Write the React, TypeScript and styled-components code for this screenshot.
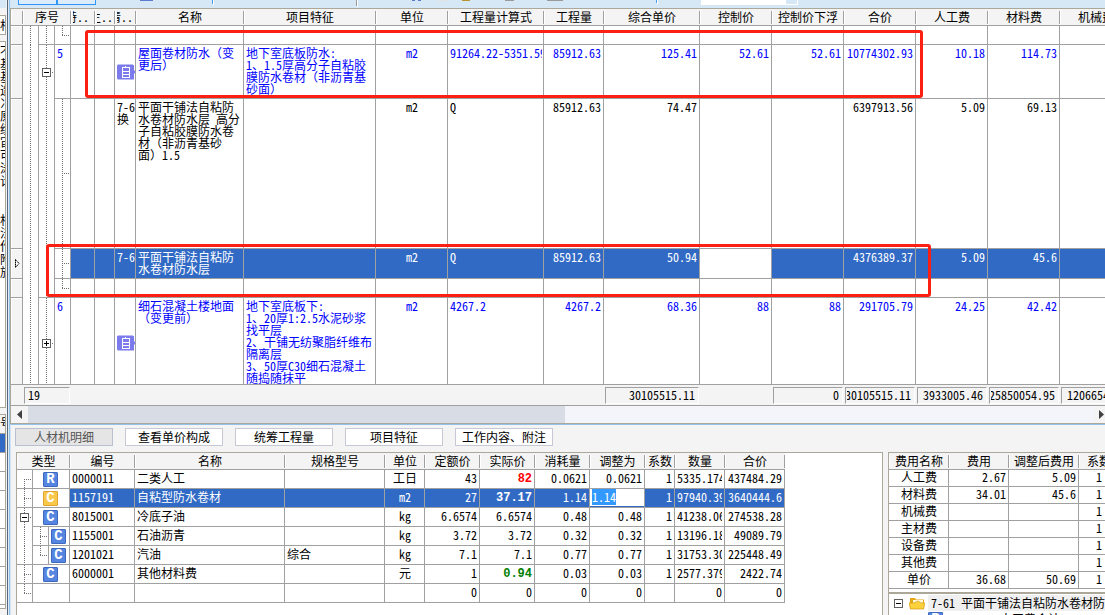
import React, { useEffect, useRef } from "react";
import styled, { createGlobalStyle, css } from "styled-components";

const LINE = "#a0a0a0";
const FACE = "#f4f4f4";
const EDGE = "#aca899";
const SELECT = "#316ac5";

const GlobalStyle = createGlobalStyle`
  * { box-sizing: border-box; }
  body {
    margin: 0;
    background: ${FACE};
    color: #000;
    font: 12px/12px "Noto Sans CJK SC", sans-serif;
    font-feature-settings: "hwid";
    overflow: hidden;
  }
  button, input { font: inherit; font-feature-settings: inherit; color: inherit; }
  svg { display: block; flex-shrink: 0; }
`;

const Page = styled.div`
  display: flex;
  height: 100vh;
`;

/* ---------- neighbouring window on the left ---------- */

const Side = styled.aside`
  flex: 0 0 10px;
  display: flex;
  flex-direction: column;
  background: linear-gradient(90deg, ${FACE} 7px, #56677a 7px 8px, #dfe9f2 8px 9px, #93c3ea 9px);
  padding-right: 4px;
  overflow: hidden;
`;
const SideBar = styled.div`
  height: 15px;
  background: linear-gradient(#d6e8f6 8px, ${FACE} 8px);
`;
const SidePane = styled.div<{ $h?: number }>`
  ${(p) => (p.$h ? `height: ${p.$h}px;` : "flex: 1;")}
  flex-shrink: ${(p) => (p.$h ? 0 : 1)};
  border: solid ${EDGE};
  border-width: 1px 1px 1px 0;
  background: #fff;
  overflow: hidden;
  margin-bottom: 6px;
`;
const SideText = styled.div`
  line-height: 13px;
  padding-top: 2px;
  white-space: pre-line;
  width: 12px;
`;
const SideRow = styled.div<{ $on?: boolean; $head?: boolean }>`
  height: 19px;
  width: 12px;
  padding-top: 2px;
  border-bottom: 1px solid ${LINE};
  background: ${(p) => (p.$on ? SELECT : p.$head ? FACE : "#fff")};
`;

/* ---------- main window ---------- */

const Main = styled.main`
  flex: 1;
  min-width: 0;
  display: flex;
  flex-direction: column;
`;
const Toolbar = styled.div`
  height: 8px;
  background: #d6e8f6;
  overflow: hidden;
`;
const Pane = styled.section`
  position: relative;
  border: solid ${EDGE};
  border-width: 1px 0 1px 1px;
`;
const Viewport = styled.div<{ $h?: number }>`
  overflow: hidden;
  ${(p) => (p.$h ? `height: ${p.$h}px;` : "")}
`;
const TotalsBar = styled(Viewport)`
  border-top: 1px solid ${LINE};
  background: ${FACE};
`;

const Table = styled.table`
  table-layout: fixed;
  width: 0;
  border-spacing: 0;
  background: #fff;
`;
const Th = styled.th`
  height: 17px;
  padding: 0 2px;
  font-weight: normal;
  text-align: center;
  white-space: nowrap;
  border-bottom: 1px solid ${LINE};
  background:
    linear-gradient(${LINE}, ${LINE}) right 2px / 1px 13px no-repeat,
    linear-gradient(#fff, #fff) left 2px / 1px 13px no-repeat,
    ${FACE};
`;
const ShortHead = styled.div`
  display: flex;
  justify-content: flex-end;
  overflow-x: clip;
  width: 16px;
`;
type CellProps = {
  $align?: "left" | "center" | "right";
  $mid?: boolean;
  $tight?: boolean;
  $flush?: boolean;
  $on?: boolean;
  $tone?: string;
  $bold?: boolean;
};
const Td = styled.td<CellProps>`
  padding: ${(p) => (p.$flush ? "0" : `${p.$mid ? 0 : 2}px ${p.$align === "right" ? 2 : p.$tight ? 0 : 1}px 0 2px`)};
  border: solid ${LINE};
  border-width: 0 1px 1px 0;
  vertical-align: ${(p) => (p.$mid ? "middle" : "top")};
  text-align: ${(p) => p.$align ?? "left"};
  background: ${(p) => (p.$on ? SELECT : "#fff")};
  color: ${(p) => p.$tone ?? "inherit"};
  ${(p) => p.$bold && css`font: bold 12px/15px "Liberation Mono", monospace;`}
`;
const Clip = styled.div`
  white-space: pre;
  overflow-x: clip;
`;
const Wide = styled.span`
  font-feature-settings: normal;
`;
const Gutter = styled.td`
  padding: 0 0 0 3px;
  border: solid ${LINE};
  border-width: 0 1px 1px 0;
  background: ${FACE};
  box-shadow: inset 1px 1px #fff;
  vertical-align: middle;
`;

type Trunk = "full" | "top" | "bottom";
const trunkBox = { full: "0 / 1px 100%", top: "0 / 1px 50%", bottom: "100% / 1px 50%" };
const Branch = styled.td<{ $trunk?: Trunk; $stub?: boolean; $open?: boolean }>`
  padding: 0;
  border: solid ${LINE};
  border-width: 0 1px ${(p) => (p.$open ? 0 : 1)}px 0;
  vertical-align: middle;
  background:
    repeating-linear-gradient(#707070 0 1px, transparent 1px 2px) 7px ${(p) => trunkBox[p.$trunk ?? "full"]} no-repeat,
    repeating-linear-gradient(90deg, #707070 0 1px, transparent 1px 2px) 7px 50% / ${(p) => (p.$stub ? "8px 1px" : "0 0")} no-repeat,
    #fff;
`;
const Toggle = styled.button`
  display: block;
  flex-shrink: 0;
  width: 9px;
  height: 9px;
  margin: 0 auto;
  padding: 0;
  border: 1px solid #606060;
  background:
    linear-gradient(#000, #000) center / 5px 1px no-repeat,
    #fff;
  &[aria-expanded="false"] {
    background:
      linear-gradient(#000, #000) center / 5px 1px no-repeat,
      linear-gradient(#000, #000) center / 1px 5px no-repeat,
      #fff;
  }
`;

const Total = styled.td`
  padding: 2px 1px 1px;
  height: 20px;
  background: ${FACE};
`;
const TotalBox = styled.div`
  height: 17px;
  display: flex;
  padding: 0 3px 0 1px;
  border: 1px solid #fff;
  border-color: ${LINE} #fff #fff ${LINE};
  line-height: 13px;
`;
const TotalText = styled.span<{ $left?: boolean }>`
  flex: 1;
  min-width: 0;
  display: flex;
  justify-content: ${(p) => (p.$left ? "flex-start" : "flex-end")};
  padding-left: ${(p) => (p.$left ? 2 : 0)}px;
  overflow-x: clip;
`;

const ScrollBar = styled.div`
  display: flex;
  height: 18px;
  border-top: 1px solid ${LINE};
  background: #f4f5fb;
`;
const ScrollButton = styled.button`
  flex: 0 0 17px;
  padding: 0;
  border: 0;
  background: ${FACE};
  display: flex;
  align-items: center;
  justify-content: center;
  &:last-child {
    flex-basis: 11px;
    justify-content: flex-end;
  }
`;
const ScrollTrack = styled.div`
  flex: 1;
`;
const ScrollThumb = styled.div`
  width: calc(50% + 4px);
  height: 17px;
  background: #d8dce5;
`;

const Mark = styled.div<{ $x: number; $y: number; $w: number; $h: number }>`
  position: absolute;
  left: ${(p) => p.$x}px;
  top: ${(p) => p.$y}px;
  width: ${(p) => p.$w}px;
  height: ${(p) => p.$h}px;
  border: 3px solid #fd2012;
  border-radius: 3px;
  pointer-events: none;
`;

/* ---------- lower area ---------- */

const Lower = styled.section`
  flex: 1;
  min-height: 0;
  display: flex;
  flex-direction: column;
  border-top: 1px solid #93c3ea;
  border-left: 1px solid #cfe3f4;
`;
const Tabs = styled.div`
  display: flex;
  gap: 12px;
  padding: 3px 4px 6px;
`;
const Tab = styled.button`
  width: 98px;
  height: 18px;
  padding: 0;
  border: 1px solid #c6c8d6;
  background: #fff;
  white-space: nowrap;
  &[aria-selected="true"] {
    background: #e5e5e5;
    border-color: #babfd0;
    color: #555;
  }
`;
const Split = styled.div`
  flex: 1;
  min-height: 0;
  display: flex;
  gap: 5px;
  padding-left: 5px;
`;
const Detail = styled.div`
  flex: 1;
  min-width: 0;
  overflow: hidden;
  background: #fff;
  border: solid ${EDGE};
  border-width: 1px 1px 0 1px;
`;
const Right = styled.div`
  flex: 0 0 217px;
  overflow: hidden;
  background: #fff;
  border: solid ${EDGE};
  border-width: 1px 0 0 1px;
`;
const Kind = styled.span<{ $gold?: boolean }>`
  display: block;
  width: 15px;
  height: 15px;
  border: 1px solid ${(p) => (p.$gold ? "#e0a52c" : "#3c68bd")};
  border-radius: 1px;
  background: ${(p) => (p.$gold ? "#f9c74a" : "#5585e0")};
  color: #fff;
  font: bold 14px/13px "Liberation Mono", monospace;
  text-align: center;
`;
const KindCell = styled.td<{ $pad: number }>`
  padding: 0 0 0 ${(p) => p.$pad}px;
  border: solid ${LINE};
  border-width: 0 1px 1px 0;
  vertical-align: middle;
`;
const FeeCell = styled(Td)`
  padding-top: 1px;
`;
const FactorCell = styled(FeeCell)`
  padding-left: 17px;
`;
const Editor = styled.input`
  display: block;
  width: 54px;
  height: 17px;
  padding: 0 0 3px 2px;
  border: 0;
  outline: 0;
  background: #fff;
  color: #000;
  caret-color: transparent;
  &::selection { background: #3399ff; color: #fff; }
`;
const Outline = styled.ul`
  list-style: none;
  margin: 3px 0 0;
  padding: 1px 0 0 5px;
  border-top: 2px solid ${EDGE};
`;
const Node = styled.li<{ $depth: number; $root?: boolean }>`
  display: flex;
  align-items: center;
  height: 16px;
  padding-left: ${(p) => p.$depth * 34}px;
  white-space: nowrap;
  gap: ${(p) => (p.$root ? 6 : 57)}px;
  ${(p) => p.$root && css`background: linear-gradient(90deg, #fff 34px, #f0f0f0 34px);`}
  & > ${Toggle} { margin: 0; }
`;

/* ---------- small drawings ---------- */

const NoteIcon = () => (
  <svg width="18" height="16" viewBox="0 0 18 16">
    <path d="M1 0.500H16V1H17V6L18 7V9L17 10V15.500H1L0 14.500V1.500Z" fill="#7b7bee" />
    <path d="M5 3H8V2H9V3H13V14H5ZM6 4V7H12V4ZM6 8V10H12V8ZM6 11V13H12V11Z" fill="#fff" fillRule="evenodd" />
  </svg>
);
const FolderIcon = () => (
  <svg width="16" height="14" viewBox="0 0 16 14">
    <path d="M1 2H6L7 3.500H15V13H1Z" fill="#e6a817" />
    <path d="M4 4H14V8H4Z" fill="#fff6d8" />
    <path d="M0 7H5L9 5L12 7H16L14.500 13H1.500Z" fill="#fbd23c" stroke="#d79a10" strokeWidth="0.700" />
  </svg>
);
const ToolbarArt = () => (
  <svg width="1100" height="8" viewBox="10 0 1100 8" shapeRendering="crispEdges">
    <path d="M18.500 -2V4.500H56.500V-2M57.500 -2V4.500H95.500V-2" stroke="#2f96f5" fill="#dcecfa" />
    <path d="M140 0h13v1h-13zM412 0h3v1h-3zM418 0h3v1h-3z" fill="#5a7bd0" />
    <path d="M212 0h1v4h-1zM656 0h1v3h-1z" fill="#4a9be8" />
    <path d="M213 0h1v5h-1zM657 0h1v4h-1zM357 0h1v7h-1zM701 0h97v5h-97z" fill="#fff" />
    <path d="M786 0h11v4h-11z" fill="#d6e8f6" />
    <path d="M356 0h1v6h-1zM547 0h16v1h-16zM505 0h9v1h-9z" fill="#9a9a9a" />
    <path d="M462 0h8v1h-8z" fill="#b8922c" />
    <path d="M438 0h9v1h-9z" fill="#e2e2e2" />
  </svg>
);
const Arrow = ({ d }: { d: string }) => (
  <svg width="6" height="9" viewBox="0 0 6 9"><path d={d} fill="#404040" /></svg>
);
const RowPointer = () => (
  <svg width="6" height="9" viewBox="0 0 6 9">
    <path d="M1.500 0.500V8.500L5 4.500Z" fill="#fff" stroke="#000" strokeDasharray="1.500 0.500" />
  </svg>
);

/* Digits are half width here; brackets keep their full width. */
const Text = ({ children }: { children?: string }) => (
  <>
    {(children ?? "").split(/([（）])/).map((part, i) =>
      part === "（" || part === "）" ? <Wide key={i}>{part}</Wide> : part
    )}
  </>
);

/* ---------- bill table ---------- */

const billCols = [12, 16, 16, 16, 24, 20, 21, 108, 132, 72, 96, 60, 96, 72, 72, 72, 72, 72, 72];
const billHeads = ["特..", "主..", "清..", "名称", "项目特征", "单位", "工程量计算式", "工程量", "综合单价", "控制价", "控制价下浮", "合价", "人工费", "材料费", "机械费"];

type BillRow = {
  h: number;
  openB?: boolean;
  toggle?: "open" | "shut";
  trunkC?: Trunk;
  no?: string;
  code?: string;
  note?: boolean;
  name?: string;
  feature?: string;
  unit?: string;
  nums?: string[];
  blue?: boolean;
  selected?: boolean;
};
const billRows: BillRow[] = [
  { h: 19, trunkC: "top" },
  {
    h: 54, toggle: "open", openB: true, no: "5", note: true, blue: true,
    name: "屋面卷材防水（变\n更后）",
    feature: "地下室底板防水:\n1、1.5厚高分子自粘胶\n膜防水卷材（非沥青基\n砂面）",
    unit: "m2",
    nums: ["91264.22-5351.59", "85912.63", "125.41", "52.61", "52.61", "10774302.93", "10.18", "114.73", ""],
  },
  {
    h: 150, openB: true, trunkC: "full", code: "7-6\n换",
    name: "平面干铺法自粘防\n水卷材防水层 高分\n子自粘胶膜防水卷\n材（非沥青基砂\n面）1.5",
    unit: "m2", nums: ["Q", "85912.63", "74.47", "", "", "6397913.56", "5.09", "69.13", ""],
  },
  {
    h: 30, openB: true, trunkC: "full", code: "7-6", selected: true,
    name: "平面干铺法自粘防\n水卷材防水层",
    unit: "m2", nums: ["Q", "85912.63", "50.94", "", "", "4376389.37", "5.09", "45.6", ""],
  },
  { h: 19, trunkC: "top" },
  {
    h: 91, toggle: "shut", no: "6", note: true, blue: true,
    name: "细石混凝土楼地面\n（变更前）",
    feature: "地下室底板下:\n1、20厚1:2.5水泥砂浆\n找平层\n2、干铺无纺聚脂纤维布\n隔离层\n3、50厚C30细石混凝土\n随捣随抹平",
    unit: "m2",
    nums: ["4267.2", "4267.2", "68.36", "88", "88", "291705.79", "24.25", "42.42", ""],
  },
];

const Cols = ({ widths }: { widths: number[] }) => (
  <colgroup>{widths.map((w, i) => <col key={i} width={w} />)}</colgroup>
);

const BillLine = ({ row }: { row: BillRow }) => {
  const tone = row.blue ? "#0000ff" : row.selected ? "#fff" : undefined;
  const nums = row.nums ?? Array(9).fill("");
  const cell = { $on: row.selected, $tone: tone };
  return (
    <tr style={{ height: row.h }}>
      <Gutter>{row.selected && <RowPointer />}</Gutter>
      <Branch $open />
      <Branch $open={row.openB} $stub={!!row.toggle}>
        {row.toggle && <Toggle aria-label="展开" aria-expanded={row.toggle === "open"} />}
      </Branch>
      {row.no ? <Td $tone={tone}>{row.no}</Td> : <Branch $trunk={row.trunkC} $stub />}
      <Td {...cell} />
      <Td {...cell} />
      <Td {...cell} $mid={row.note} $tight>
        {row.note ? <NoteIcon /> : <Clip>{row.code}</Clip>}
      </Td>
      <Td {...cell}><Clip><Text>{row.name}</Text></Clip></Td>
      <Td {...cell}><Clip><Text>{row.feature}</Text></Clip></Td>
      <Td {...cell} $align="center">{row.unit}</Td>
      {nums.map((n, i) => (
        <Td key={i} {...cell} $on={row.selected && i !== 3} $align={i === 0 ? "left" : "right"}>
          <Clip>{n}</Clip>
        </Td>
      ))}
    </tr>
  );
};

const totals: Record<number, string> = { 12: "30105515.11", 14: "0", 15: "30105515.11", 16: "3933005.46", 17: "25850054.95", 18: "1206654.32" };

/* ---------- resource table ---------- */

const resCols = [16, 16, 21, 65, 150, 100, 40, 55, 55, 55, 55, 30, 50, 60];
const resHeads = ["编号", "名称", "规格型号", "单位", "定额价", "实际价", "消耗量", "调整为", "系数", "数量", "合价"];
type ResRow = { kind?: string; child?: boolean; trunk: Trunk; stub?: boolean; open?: boolean; toggle?: boolean; selected?: boolean; tone?: string; v: string[] };
const resRows: ResRow[] = [
  { kind: "R", trunk: "bottom", stub: true, tone: "#f00", v: ["0000011", "二类人工", "", "工日", "43", "82", "0.0621", "0.0621", "1", "5335.1742", "437484.29"] },
  { kind: "C", trunk: "full", stub: true, selected: true, tone: "#fff", v: ["1157191", "自粘型防水卷材", "", "m2", "27", "37.17", "1.14", "1.14", "1", "97940.3982", "3640444.6"] },
  { kind: "C", trunk: "full", stub: true, toggle: true, open: true, v: ["8015001", "冷底子油", "", "kg", "6.6574", "6.6574", "0.48", "0.48", "1", "41238.0624", "274538.28"] },
  { kind: "C", child: true, trunk: "full", open: true, v: ["1155001", "石油沥青", "", "kg", "3.72", "3.72", "0.32", "0.32", "1", "13196.18", "49089.79"] },
  { kind: "C", child: true, trunk: "full", v: ["1201021", "汽油", "综合", "kg", "7.1", "7.1", "0.77", "0.77", "1", "31753.308", "225448.49"] },
  { kind: "C", trunk: "full", stub: true, tone: "#008000", v: ["6000001", "其他材料费", "", "元", "1", "0.94", "0.03", "0.03", "1", "2577.3799", "2422.74"] },
  { trunk: "top", stub: true, v: ["", "", "", "", "0", "0", "0", "0", "", "0", "0"] },
];

const ResLine = ({ row }: { row: ResRow }) => {
  const input = useRef<HTMLInputElement>(null);
  useEffect(() => {
    input.current?.focus();
    input.current?.select();
  }, []);
  const icon = row.kind && <Kind $gold={row.selected}>{row.kind}</Kind>;
  return (
    <tr style={{ height: 19 }}>
      <Branch $trunk={row.trunk} $stub={row.stub} $open={row.open}>
        {row.toggle && <Toggle aria-label="展开" aria-expanded />}
      </Branch>
      {row.child ? (
        <>
          <Branch $trunk={row.open ? "full" : "top"} $stub />
          <KindCell $pad={2}>{icon}</KindCell>
        </>
      ) : (
        <KindCell colSpan={2} $pad={10}>{icon}</KindCell>
      )}
      {row.v.map((v, i) =>
        row.selected && i === 7 ? (
          <Td key={i} $on $flush>
            <Editor ref={input} aria-label="调整为" defaultValue={v} />
          </Td>
        ) : (
          <Td
            key={i}
            $on={row.selected}
            $align={i < 3 ? "left" : i === 3 ? "center" : "right"}
            $tone={i === 5 && row.tone ? row.tone : row.selected ? "#fff" : undefined}
            $bold={i === 5 && !!row.tone}
          >
            <Clip>{v}</Clip>
          </Td>
        )
      )}
    </tr>
  );
};

/* ---------- fee table ---------- */

const feeRows = [
  ["人工费", "2.67", "5.09"], ["材料费", "34.01", "45.6"], ["机械费", "", ""], ["主材费", "", ""],
  ["设备费", "", ""], ["其他费", "", ""], ["单价", "36.68", "50.69"],
];

export default function App() {
  return (
    <Page>
      <GlobalStyle />
      <Side>
        <SideBar />
        <SidePane $h={20}><SideText>相</SideText></SidePane>
        <SidePane $h={367}>
          <SideText>{"不\n基\n基\n造\n冫\n原\n绩\n宙\n可\n泳\n计\n\n\n相\n法\n作\n附\n旅"}</SideText>
        </SidePane>
        <SidePane>
          <SideRow $head>号</SideRow>
          <SideRow $on />
          {Array.from({ length: 9 }, (_, i) => <SideRow key={i} />)}
        </SidePane>
      </Side>
      <Main>
        <Toolbar><ToolbarArt /></Toolbar>
        <Pane>
          <Viewport $h={375}>
            <Table>
              <Cols widths={billCols} />
              <thead>
                <tr>
                  <Th />
                  <Th colSpan={3}>序号</Th>
                  {billHeads.map((h, i) => (
                    <Th key={h} scope="col">{i < 3 ? <ShortHead><span>{h}</span></ShortHead> : h}</Th>
                  ))}
                </tr>
              </thead>
              <tbody>{billRows.map((r, i) => <BillLine key={i} row={r} />)}</tbody>
            </Table>
          </Viewport>
          <TotalsBar>
            <Table>
              <Cols widths={billCols} />
              <tbody>
                <tr>
                  <Total />
                  <Total colSpan={3}><TotalBox><TotalText $left>19</TotalText></TotalBox></Total>
                  {billCols.slice(4).map((_, k) => (
                    <Total key={k}>
                      {totals[k + 4] && <TotalBox><TotalText>{totals[k + 4]}</TotalText></TotalBox>}
                    </Total>
                  ))}
                </tr>
              </tbody>
            </Table>
          </TotalsBar>
          <ScrollBar>
            <ScrollButton aria-label="向左滚动"><Arrow d="M5 0V9L0 4.500Z" /></ScrollButton>
            <ScrollTrack><ScrollThumb /></ScrollTrack>
            <ScrollButton aria-label="向右滚动"><Arrow d="M0 0V9L5 4.500Z" /></ScrollButton>
          </ScrollBar>
          <Mark $x={74} $y={21} $w={838} $h={68} />
          <Mark $x={35} $y={235} $w={885} $h={53} />
        </Pane>
        <Lower>
          <Tabs role="tablist">
            {["人材机明细", "查看单价构成", "统筹工程量", "项目特征", "工作内容、附注"].map((t, i) => (
              <Tab key={t} role="tab" aria-selected={i === 0}>{t}</Tab>
            ))}
          </Tabs>
          <Split>
            <Detail>
              <Table>
                <Cols widths={resCols} />
                <thead>
                  <tr>
                    <Th colSpan={3}>类型</Th>
                    {resHeads.map((h) => <Th key={h} scope="col">{h}</Th>)}
                  </tr>
                </thead>
                <tbody>{resRows.map((r, i) => <ResLine key={i} row={r} />)}</tbody>
              </Table>
            </Detail>
            <Right>
              <Table>
                <Cols widths={[60, 60, 70, 40]} />
                <thead>
                  <tr>{["费用名称", "费用", "调整后费用", "系数"].map((h) => <Th key={h} scope="col">{h}</Th>)}</tr>
                </thead>
                <tbody>
                  {feeRows.map(([name, fee, adj]) => (
                    <tr key={name} style={{ height: 17 }}>
                      <FeeCell $align="center">{name}</FeeCell>
                      <FeeCell $align="right">{fee}</FeeCell>
                      <FeeCell $align="right">{adj}</FeeCell>
                      <FactorCell>1</FactorCell>
                    </tr>
                  ))}
                </tbody>
              </Table>
              <Outline>
                <Node $depth={0} $root>
                  <Toggle aria-label="展开" aria-expanded />
                  <FolderIcon />
                  <span>7-61 平面干铺法自粘防水卷材防水层</span>
                </Node>
                <Node $depth={1}>
                  <Kind>R</Kind>
                  <span>人工费合计</span>
                </Node>
              </Outline>
            </Right>
          </Split>
        </Lower>
      </Main>
    </Page>
  );
}
